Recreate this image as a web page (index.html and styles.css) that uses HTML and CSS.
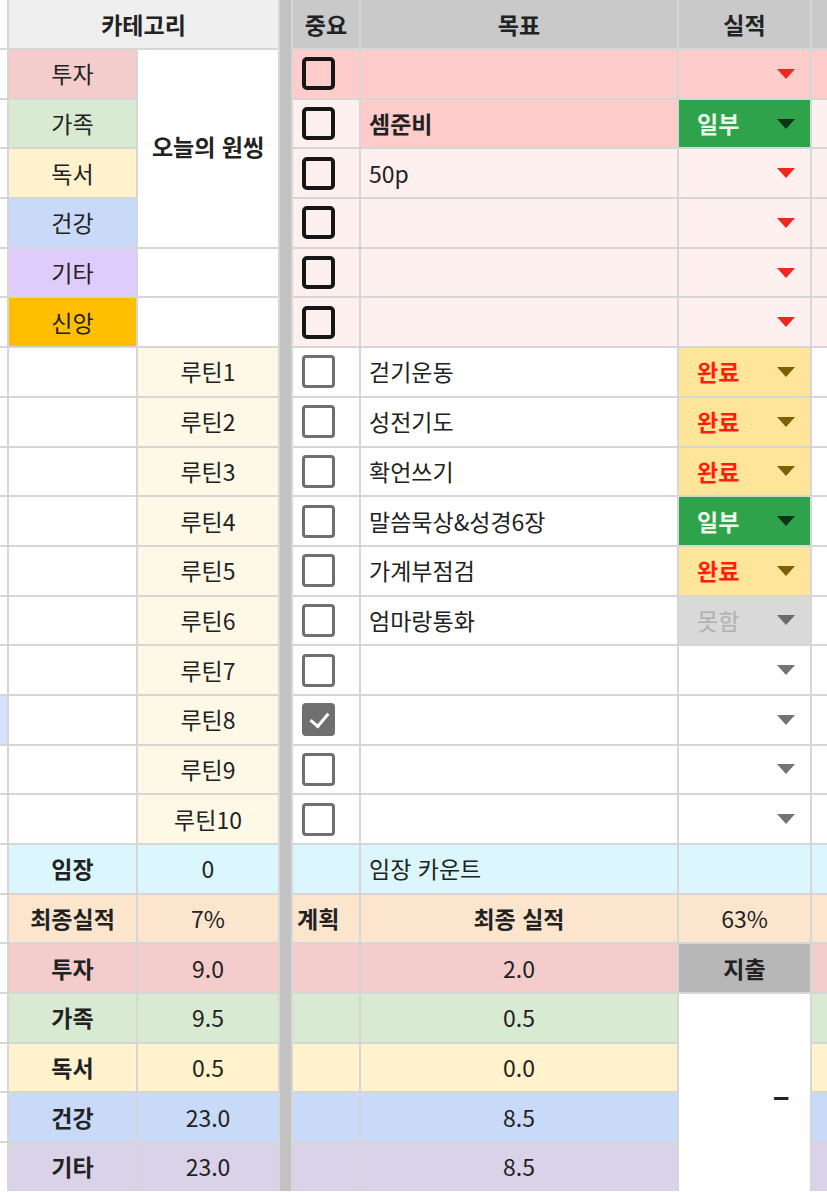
FILE: index.html
```
<!DOCTYPE html>
<html lang="ko">
<head>
    <meta charset="UTF-8">
    <meta name="viewport" content="width=device-width, initial-scale=1.0">
    <title>원씽 루틴 시트</title>
    <link rel="stylesheet" href="styles.css">
</head>
<body>
    <div class="sheet">
        <div class="sep"></div>

        <!-- 헤더 -->
        <div class="cell"></div>
        <div class="cell hd-light span-2 bold">카테고리</div>
        <div class="cell hd bold">중요</div>
        <div class="cell hd bold">목표</div>
        <div class="cell hd bold">실적</div>
        <div class="cell hd"></div>

        <!-- 오늘의 원씽 -->
        <div class="cell"></div>
        <div class="cell c-pink">투자</div>
        <div class="cell onething bold">오늘의 원씽</div>
        <div class="cell pink chk"><span class="box dark"></span></div>
        <div class="cell pink"></div>
        <div class="cell pink drop"><span></span><i class="tri red"></i></div>
        <div class="cell pink"></div>

        <div class="cell"></div>
        <div class="cell c-green">가족</div>
        <div class="cell lpink chk"><span class="box dark"></span></div>
        <div class="cell pink left bold">셈준비</div>
        <div class="cell st-part drop"><span>일부</span><i class="tri"></i></div>
        <div class="cell lpink"></div>

        <div class="cell"></div>
        <div class="cell c-yellow">독서</div>
        <div class="cell lpink chk"><span class="box dark"></span></div>
        <div class="cell lpink left">50p</div>
        <div class="cell lpink drop"><span></span><i class="tri red"></i></div>
        <div class="cell lpink"></div>

        <div class="cell"></div>
        <div class="cell c-blue">건강</div>
        <div class="cell lpink chk"><span class="box dark"></span></div>
        <div class="cell lpink"></div>
        <div class="cell lpink drop"><span></span><i class="tri red"></i></div>
        <div class="cell lpink"></div>

        <div class="cell"></div>
        <div class="cell c-lilac">기타</div>
        <div class="cell"></div>
        <div class="cell lpink chk"><span class="box dark"></span></div>
        <div class="cell lpink"></div>
        <div class="cell lpink drop"><span></span><i class="tri red"></i></div>
        <div class="cell lpink"></div>

        <div class="cell"></div>
        <div class="cell c-amber">신앙</div>
        <div class="cell"></div>
        <div class="cell lpink chk"><span class="box dark"></span></div>
        <div class="cell lpink"></div>
        <div class="cell lpink drop"><span></span><i class="tri red"></i></div>
        <div class="cell lpink"></div>

        <!-- 루틴 -->
        <div class="cell"></div>
        <div class="cell"></div>
        <div class="cell routine">루틴1</div>
        <div class="cell chk"><span class="box"></span></div>
        <div class="cell left">걷기운동</div>
        <div class="cell st-done drop"><span>완료</span><i class="tri"></i></div>
        <div class="cell"></div>

        <div class="cell"></div>
        <div class="cell"></div>
        <div class="cell routine">루틴2</div>
        <div class="cell chk"><span class="box"></span></div>
        <div class="cell left">성전기도</div>
        <div class="cell st-done drop"><span>완료</span><i class="tri"></i></div>
        <div class="cell"></div>

        <div class="cell"></div>
        <div class="cell"></div>
        <div class="cell routine">루틴3</div>
        <div class="cell chk"><span class="box"></span></div>
        <div class="cell left">확언쓰기</div>
        <div class="cell st-done drop"><span>완료</span><i class="tri"></i></div>
        <div class="cell"></div>

        <div class="cell"></div>
        <div class="cell"></div>
        <div class="cell routine">루틴4</div>
        <div class="cell chk"><span class="box"></span></div>
        <div class="cell left">말씀묵상&amp;성경6장</div>
        <div class="cell st-part drop"><span>일부</span><i class="tri"></i></div>
        <div class="cell"></div>

        <div class="cell"></div>
        <div class="cell"></div>
        <div class="cell routine">루틴5</div>
        <div class="cell chk"><span class="box"></span></div>
        <div class="cell left">가계부점검</div>
        <div class="cell st-done drop"><span>완료</span><i class="tri"></i></div>
        <div class="cell"></div>

        <div class="cell"></div>
        <div class="cell"></div>
        <div class="cell routine">루틴6</div>
        <div class="cell chk"><span class="box"></span></div>
        <div class="cell left">엄마랑통화</div>
        <div class="cell st-miss drop"><span>못함</span><i class="tri"></i></div>
        <div class="cell"></div>

        <div class="cell"></div>
        <div class="cell"></div>
        <div class="cell routine">루틴7</div>
        <div class="cell chk"><span class="box"></span></div>
        <div class="cell"></div>
        <div class="cell drop"><span></span><i class="tri"></i></div>
        <div class="cell"></div>

        <div class="cell sel"></div>
        <div class="cell"></div>
        <div class="cell routine">루틴8</div>
        <div class="cell chk"><span class="box checked"></span></div>
        <div class="cell"></div>
        <div class="cell drop"><span></span><i class="tri"></i></div>
        <div class="cell"></div>

        <div class="cell"></div>
        <div class="cell"></div>
        <div class="cell routine">루틴9</div>
        <div class="cell chk"><span class="box"></span></div>
        <div class="cell"></div>
        <div class="cell drop"><span></span><i class="tri"></i></div>
        <div class="cell"></div>

        <div class="cell"></div>
        <div class="cell"></div>
        <div class="cell routine">루틴10</div>
        <div class="cell chk"><span class="box"></span></div>
        <div class="cell"></div>
        <div class="cell drop"><span></span><i class="tri"></i></div>
        <div class="cell"></div>

        <!-- 집계 -->
        <div class="cell"></div>
        <div class="cell cyan bold">임장</div>
        <div class="cell cyan">0</div>
        <div class="cell cyan"></div>
        <div class="cell cyan left">임장 카운트</div>
        <div class="cell cyan"></div>
        <div class="cell cyan"></div>

        <div class="cell"></div>
        <div class="cell peach bold">최종실적</div>
        <div class="cell peach">7%</div>
        <div class="cell peach left bold plan">계획</div>
        <div class="cell peach bold">최종 실적</div>
        <div class="cell peach">63%</div>
        <div class="cell peach"></div>

        <div class="cell"></div>
        <div class="cell c-pink bold">투자</div>
        <div class="cell c-pink">9.0</div>
        <div class="cell c-pink"></div>
        <div class="cell c-pink">2.0</div>
        <div class="cell spend bold">지출</div>
        <div class="cell c-pink"></div>

        <div class="cell"></div>
        <div class="cell c-green bold">가족</div>
        <div class="cell c-green">9.5</div>
        <div class="cell c-green"></div>
        <div class="cell c-green">0.5</div>
        <div class="cell spend-val">–</div>
        <div class="cell c-green"></div>

        <div class="cell"></div>
        <div class="cell c-yellow bold">독서</div>
        <div class="cell c-yellow">0.5</div>
        <div class="cell c-yellow"></div>
        <div class="cell c-yellow">0.0</div>
        <div class="cell c-yellow"></div>

        <div class="cell"></div>
        <div class="cell c-blue bold">건강</div>
        <div class="cell c-blue">23.0</div>
        <div class="cell c-blue"></div>
        <div class="cell c-blue">8.5</div>
        <div class="cell c-blue"></div>

        <div class="cell"></div>
        <div class="cell c-purple bold">기타</div>
        <div class="cell c-purple">23.0</div>
        <div class="cell c-purple"></div>
        <div class="cell c-purple">8.5</div>
        <div class="cell c-purple"></div>
    </div>
</body>
</html>
```

FILE: styles.css
```
* {
    margin: 0;
    padding: 0;
    box-sizing: border-box;
}

body {
    font-family: "Noto Sans CJK KR", "Noto Sans", sans-serif;
    background: #fff;
    color: #222;
    width: 827px;
    height: 1192px;
    overflow: hidden;
}

.sheet {
    display: grid;
    grid-template-columns: 7px 127px 140px 11px 66px 316px 131px 40px;
    grid-template-rows: 48px repeat(23, 47.7px);
    gap: 2px;
    background: #d6d6d6;
    width: 866px;
}

.sep {
    grid-column: 4;
    grid-row: 1 / -1;
    background: #c2c2c2;
}

.cell {
    background: #fff;
    display: flex;
    align-items: center;
    justify-content: center;
    font-size: 23px;
    line-height: 1;
    white-space: nowrap;
    overflow: hidden;
}

.bold {
    font-weight: 700;
}

.left {
    justify-content: flex-start;
    padding-left: 8px;
}

.plan {
    padding-left: 4px;
}

.span-2 {
    grid-column: span 2;
}

/* 헤더 */
.hd {
    background: #c9c9c9;
}

.hd-light {
    background: #efefef;
}

.onething {
    grid-row: span 4;
    padding-bottom: 4px;
}

/* 카테고리 색 */
.c-pink { background: #f4cccc; }
.c-green { background: #d9ead3; }
.c-yellow { background: #fff2cc; }
.c-blue { background: #c9daf8; }
.c-lilac { background: #dfcbfc; }
.c-purple { background: #d9d2e9; }
.c-amber { background: #ffbf00; }

.pink { background: #ffcccc; }
.lpink { background: #fff0f0; }
.routine { background: #fef8e6; }
.cyan { background: #dbf7fd; }
.peach { background: #fce5cd; }
.sel { background: #d3e3fb; }

/* 체크박스 */
.chk {
    justify-content: flex-start;
    padding-left: 9px;
}

.box {
    display: block;
    width: 33px;
    height: 33px;
    border: 3px solid #6f6f6f;
    border-radius: 4px;
}

.box.dark {
    border: 4px solid #161616;
    border-radius: 5px;
}

.box.checked {
    background: #6f6f6f;
    position: relative;
}

.box.checked::after {
    content: "";
    position: absolute;
    left: 9px;
    top: 3px;
    width: 8px;
    height: 15px;
    border-right: 3px solid #fff;
    border-bottom: 3px solid #fff;
    transform: rotate(40deg);
}

/* 드롭다운 */
.drop {
    justify-content: space-between;
    padding: 0 15px 0 18px;
    font-weight: 700;
}

.tri {
    display: block;
    width: 0;
    height: 0;
    border-left: 9px solid transparent;
    border-right: 9px solid transparent;
    border-top: 10px solid #747474;
}

.tri.red {
    border-top-color: #f0261f;
}

.st-done {
    background: #ffe599;
    color: #ff1f0f;
}

.st-done .tri {
    border-top-color: #7f6000;
}

.st-part {
    background: #2fa34c;
    color: #eafbe9;
}

.st-part .tri {
    border-top-color: #0d3415;
}

.st-miss {
    background: #d9d9d9;
    color: #b0b0b0;
    font-weight: 400;
}

.st-miss .tri {
    border-top-color: #6a6a6a;
}

/* 지출 */
.spend {
    background: #b7b7b7;
}

.spend-val {
    grid-row: span 4;
    justify-content: flex-end;
    padding: 4px 20px 0 0;
    font-size: 32px;
    font-weight: 700;
}
```
